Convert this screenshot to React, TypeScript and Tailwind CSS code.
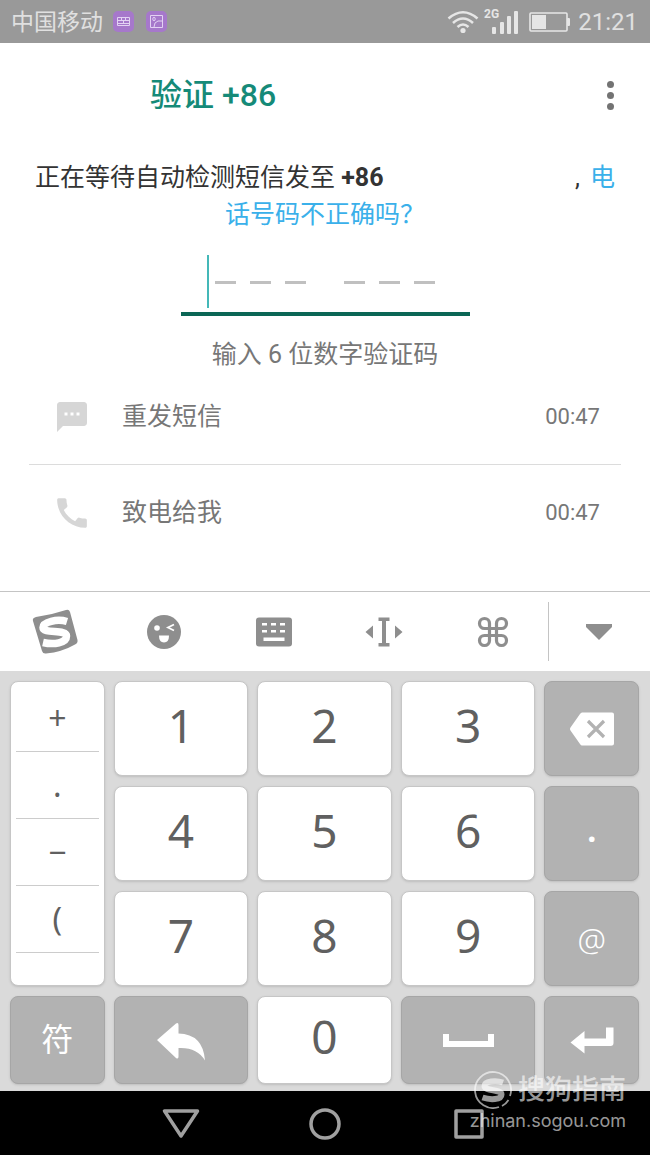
import { useState } from "react";
import type { ReactNode } from "react";
import { MdCall, MdSms } from "react-icons/md";

const symbols = ["+", ".", "−", "("];

const resendOptions = [
  { id: "sms", label: "重发短信", time: "00:47", icon: <MdSms className="size-9" /> },
  { id: "call", label: "致电给我", time: "00:47", icon: <MdCall className="size-9 scale-110" /> },
];

function StatusBar() {
  return (
    <header className="flex h-[43px] items-center justify-between bg-[#999999] pr-3 pl-[11px] text-[#e0e0e0]">
      <div className="flex items-center gap-3">
        <span className="pt-0.5 text-[23px] leading-none">中国移动</span>
        <svg className="-ml-0.5 size-[21px]" viewBox="0 0 21 21" fill="none" stroke="#e3d2f3">
          <rect width="21" height="21" rx="5" fill="#a678cb" stroke="none" />
          <path d="M4.5 6.5h12v8h-12zM4.5 9.5h12M4.5 12.5h12M8.5 6.5v3M12.5 6.5v3M10.5 9.5v3" />
        </svg>
        <svg className="size-[21px]" viewBox="0 0 21 21" fill="none" stroke="#e3d2f3">
          <rect width="21" height="21" rx="5" fill="#a678cb" stroke="none" />
          <path d="M4.5 4.5h12v12h-12zM8 16q0-5 4-6h4" />
          <ellipse cx="8" cy="8" rx="1.2" ry="1.8" />
        </svg>
      </div>
      <div className="flex items-center">
        <svg className="h-6 w-8" viewBox="0 0 32 24" fill="none" stroke="#e6e6e6" strokeWidth="2.6">
          <path d="M1.5 8.5Q16-4 30.5 8.5M6 13Q16 4 26 13M10.5 17Q16 12 21.5 17" />
          <circle cx="16" cy="20.5" r="2.6" fill="#e6e6e6" stroke="none" />
        </svg>
        <svg className="ml-1 h-8 w-9" viewBox="0 0 36 32" fill="#e6e6e6">
          <text x="1" y="12" fontSize="12" fontWeight="700" fontFamily="Roboto, sans-serif">2G</text>
          <rect x="9" y="21" width="4" height="7" rx="1" />
          <rect x="17" y="16" width="4" height="12" rx="1" />
          <rect x="24" y="10" width="4" height="18" rx="1" />
          <rect x="31" y="5" width="4" height="23" rx="1" />
        </svg>
        <svg className="ml-2.5 h-5 w-[41px]" viewBox="0 0 41 20" fill="#e6e6e6">
          <rect x="1" y="1" width="37" height="18" rx="1" fill="none" stroke="#e6e6e6" strokeWidth="1.6" />
          <rect x="3" y="3" width="14" height="14" />
          <rect x="38" y="6" width="3" height="8" rx="1" />
        </svg>
        <span className="ml-2 text-2xl leading-none">21:21</span>
      </div>
    </header>
  );
}

function CodeInput() {
  const [code, setCode] = useState("");

  return (
    <div className="mx-auto mt-[18px] grid h-[65px] w-[289px] border-b-4 border-[#0b6655]">
      <input
        id="code"
        value={code}
        onChange={(e) => setCode(e.target.value)}
        inputMode="numeric"
        maxLength={6}
        className="col-start-1 row-start-1 w-full bg-transparent px-[34px] text-3xl text-[#333333] outline-none"
      />
      {code === "" && (
        <div className="pointer-events-none col-start-1 row-start-1 flex items-center pl-[26px]">
          <span className="h-[53px] w-0.5 bg-[#44b8b8]" />
          <div className="ml-1.5 flex gap-[38px] pt-0.5">
            {[0, 1].map((group) => (
              <div key={group} className="flex gap-3.5">
                <span className="h-[3px] w-[21px] bg-[#c0c0c0]" />
                <span className="h-[3px] w-[21px] bg-[#c0c0c0]" />
                <span className="h-[3px] w-[21px] bg-[#c0c0c0]" />
              </div>
            ))}
          </div>
        </div>
      )}
    </div>
  );
}

function Toolbar() {
  const tool = "flex flex-1 items-center justify-center";
  return (
    <div className="flex h-20 items-center border-t border-[#c4c4c4] bg-white text-[#8e8e8e]">
      <button aria-label="搜狗" className={tool}>
        <svg className="size-[46px]" viewBox="0 0 46 46">
          <path
            d="M4 8Q19 6 34 1Q37 0 38 3L45.5 31Q46 34 43 35.5Q30 43 14 44.5Q11 45 10 42L1 12Q0 9 4 8Z"
            fill="currentColor"
          />
          <path
            d="M35 12.5C25 9.5 11 13 11 18.500C11 25 34.500 20 34.500 27C34.500 34 22 36 11 33.5"
            fill="none"
            stroke="#fff"
            strokeWidth="7.5"
          />
        </svg>
      </button>
      <button aria-label="表情" className={tool}>
        <svg className="size-[34px]" viewBox="0 0 34 34">
          <circle cx="17" cy="17" r="17" fill="currentColor" />
          <circle cx="10" cy="13" r="2.8" fill="#fff" />
          <path d="M27 9.5l-6 3 6 3" fill="none" stroke="#fff" strokeWidth="1.8" />
          <path d="M12 20.5h10q0 7-5 7t-5-7z" fill="#fff" />
        </svg>
      </button>
      <button aria-label="键盘" className={tool}>
        <svg className="h-[30px] w-[38px]" viewBox="0 0 38 30">
          <rect x="1" y="0.5" width="36" height="29" rx="3" fill="currentColor" />
          <path
            d="M7 6h5v2.5H7zM16 6h5v2.5h-5zM25 6h5v2.5h-5zM7 13h5v2.5H7zM16 13h5v2.5h-5zM25 13h5v2.5h-5zM8.5 20.5h21v3.5h-21z"
            fill="#fff"
          />
        </svg>
      </button>
      <button aria-label="移动光标" className={tool}>
        <svg className="h-[30px] w-[38px]" viewBox="0 0 38 30" fill="currentColor">
          <path d="M13.5 0.5h11v3.5h-3.5v22h3.5v3.5h-11V26H17V4h-3.5z" />
          <path d="M8 8.5v13L0.5 15zM30 8.5v13l7.5-6.5z" />
        </svg>
      </button>
      <button aria-label="快捷命令" className={tool}>
        <svg className="size-8" viewBox="0 0 32 32" fill="none" stroke="currentColor" strokeWidth="3.2">
          <path d="M13 12.5H7.5a5 5 0 1 1 5-5v17a5 5 0 1 1-5-5h17a5 5 0 1 1-5 5v-17a5 5 0 1 1 5 5z" />
        </svg>
      </button>
      <button aria-label="收起键盘" className="flex h-[59px] w-[102px] items-center justify-center border-l border-[#c4c4c4]">
        <svg className="h-4 w-[26px]" viewBox="0 0 26 16" fill="currentColor">
          <path d="M0 0h26v3L13 16 0 3z" />
        </svg>
      </button>
    </div>
  );
}

function NumberKey({ digit }: { digit: number }) {
  return (
    <button className="flex items-center justify-center rounded-lg border border-[#c6c6c6] bg-white pb-2 font-['Noto_Sans',sans-serif] text-[46px] leading-none text-[#606060] shadow-sm">
      {digit}
    </button>
  );
}

function GreyKey({ label, children }: { label: string; children: ReactNode }) {
  return (
    <button
      aria-label={label}
      className="flex items-center justify-center rounded-lg border border-[#a6a6a6] bg-[#b2b2b2] text-[32px] leading-none text-white shadow-sm"
    >
      {children}
    </button>
  );
}

function Keyboard() {
  return (
    <div className="grid grid-cols-[95fr_135fr_135fr_135fr_95fr] grid-rows-[95px_95px_95px_88px] gap-x-[9px] gap-y-2.5 bg-[#dadada] pt-2.5 pr-[11px] pb-[7px] pl-2.5">
      <div className="row-span-3 flex flex-col rounded-lg border border-[#c6c6c6] bg-white px-[5px] pt-[3px] shadow-sm">
        {symbols.map((symbol) => (
          <button
            key={symbol}
            className="h-[67px] border-b border-[#cccccc] font-['Noto_Sans',sans-serif] text-[32px] leading-none text-[#606060]"
          >
            {symbol}
          </button>
        ))}
      </div>
      <NumberKey digit={1} />
      <NumberKey digit={2} />
      <NumberKey digit={3} />
      <GreyKey label="删除">
        <svg className="h-[34px] w-11" viewBox="0 0 44 34">
          <path d="M12 0.5H42q2 0 2 2v29q0 2-2 2H12q-1 0-2-1.5L0.5 18.5q-1-1.5 0-3L10 2q1-1.5 2-1.5z" fill="#fff" />
          <path d="M18 9l16 16M34 9L18 25" stroke="#b2b2b2" strokeWidth="3.2" />
        </svg>
      </GreyKey>
      <NumberKey digit={4} />
      <NumberKey digit={5} />
      <NumberKey digit={6} />
      <GreyKey label="点">
        <span className="pb-2 font-['Noto_Sans',sans-serif] font-bold">.</span>
      </GreyKey>
      <NumberKey digit={7} />
      <NumberKey digit={8} />
      <NumberKey digit={9} />
      <GreyKey label="at">
        <span className="font-['Noto_Sans',sans-serif] font-light">@</span>
      </GreyKey>
      <GreyKey label="符号">符</GreyKey>
      <GreyKey label="返回">
        <svg className="mt-1 h-[38px] w-12" viewBox="0 0 48 38" fill="currentColor">
          <path d="M0 17L19 0.5Q21.5-1 21.5 2v8.5Q46 11 48 37.5Q40 24 21.5 25v8.5q0 3-2.5 1.5z" />
        </svg>
      </GreyKey>
      <NumberKey digit={0} />
      <GreyKey label="空格">
        <svg className="h-[13px] w-[51px]" viewBox="0 0 51 13" fill="currentColor">
          <path d="M0 0h6v7h39V0h6v13H0z" />
        </svg>
      </GreyKey>
      <GreyKey label="换行">
        <svg className="h-[27px] w-11" viewBox="0 0 44 27" fill="currentColor">
          <path d="M36 0.5h7.5V16q0 3-3 3H14.5v7.5L0.5 15.5 14.5 4v7.5H36z" />
        </svg>
      </GreyKey>
    </div>
  );
}

function NavBar() {
  return (
    <nav className="relative flex h-[65px] justify-center gap-[106px] bg-black text-[#a0a0a0]">
      <button aria-label="返回">
        <svg className="size-[38px]" viewBox="0 0 38 38" fill="none" stroke="currentColor" strokeWidth="3.5" strokeLinejoin="round">
          <path d="M2.5 6h33L19 31z" />
        </svg>
      </button>
      <button aria-label="主屏幕">
        <svg className="size-[38px]" viewBox="0 0 38 38" fill="none" stroke="currentColor" strokeWidth="3.5">
          <circle cx="19" cy="19" r="14" />
        </svg>
      </button>
      <button aria-label="最近任务">
        <svg className="size-[38px]" viewBox="0 0 38 38" fill="none" stroke="currentColor" strokeWidth="3.5" strokeLinejoin="round">
          <path d="M6 6h26v26H6z" />
        </svg>
      </button>
      {/* site mark, sits over the last key row and the nav bar */}
      <div className="pointer-events-none absolute right-6 bottom-[23px] text-right text-white/60">
        <div className="flex items-center justify-end gap-1.5">
          <svg className="size-[38px]" viewBox="0 0 38 38" fill="none" stroke="currentColor">
            <path d="M25 36A18 18 0 1 1 36 25M34.5 29Q32 33 28 35" strokeWidth="1.8" />
            <path d="M29 11.5C22 9 10.5 10 10.5 15C10.5 20.500 27.5 18 27.5 23.5C27.5 29 16 29 8.5 26.500" strokeWidth="6" />
          </svg>
          <span className="text-[27px] leading-none font-medium">搜狗指南</span>
        </div>
        <div className="font-['Inter',sans-serif] text-lg leading-6">zhinan.sogou.com</div>
      </div>
    </nav>
  );
}

export default function App() {
  return (
    <div className="w-full bg-white font-['Roboto','Noto_Sans_CJK_SC',sans-serif]">
      <StatusBar />
      <main className="pb-[31px]">
        <div className="flex h-[104px] items-center justify-between pr-9 pl-[150px]">
          <h1 className="text-[32px] leading-none font-medium text-[#158a78]">验证 +86</h1>
          <button aria-label="更多选项" className="flex flex-col gap-1">
            <span className="size-[7px] rounded-full bg-[#737373]" />
            <span className="size-[7px] rounded-full bg-[#737373]" />
            <span className="size-[7px] rounded-full bg-[#737373]" />
          </button>
        </div>
        <div className="mt-3 px-[35px] text-center text-[25px] leading-[37px] text-[#333333]">
          <div className="flex">
            <p>
              正在等待自动检测短信发至 <b>+86</b>
            </p>
            <span className="mr-2.5 ml-auto">,</span>
            <a href="#number" className="text-[#3ab0ea]">
              电
            </a>
          </div>
          <a href="#number" className="block text-[#3ab0ea]">
            话号码不正确吗？
          </a>
        </div>
        <CodeInput />
        <label htmlFor="code" className="mt-5 block text-center text-[25px] leading-[37px] text-[#777777]">
          输入 6 位数字验证码
        </label>
        <ul className="mx-[29px] -mt-1">
          {resendOptions.map((option) => (
            <li key={option.id} className="border-[#dcdcdc] first:border-b">
              <button className="flex h-[95px] w-full items-center pr-[21px] pl-[25px] text-[#777777]">
                <span className="text-[#d6d6d6]">{option.icon}</span>
                <span className="ml-8 text-[25px]">{option.label}</span>
                <span className="ml-auto text-[22px]">{option.time}</span>
              </button>
            </li>
          ))}
        </ul>
      </main>
      <Toolbar />
      <Keyboard />
      <NavBar />
    </div>
  );
}
